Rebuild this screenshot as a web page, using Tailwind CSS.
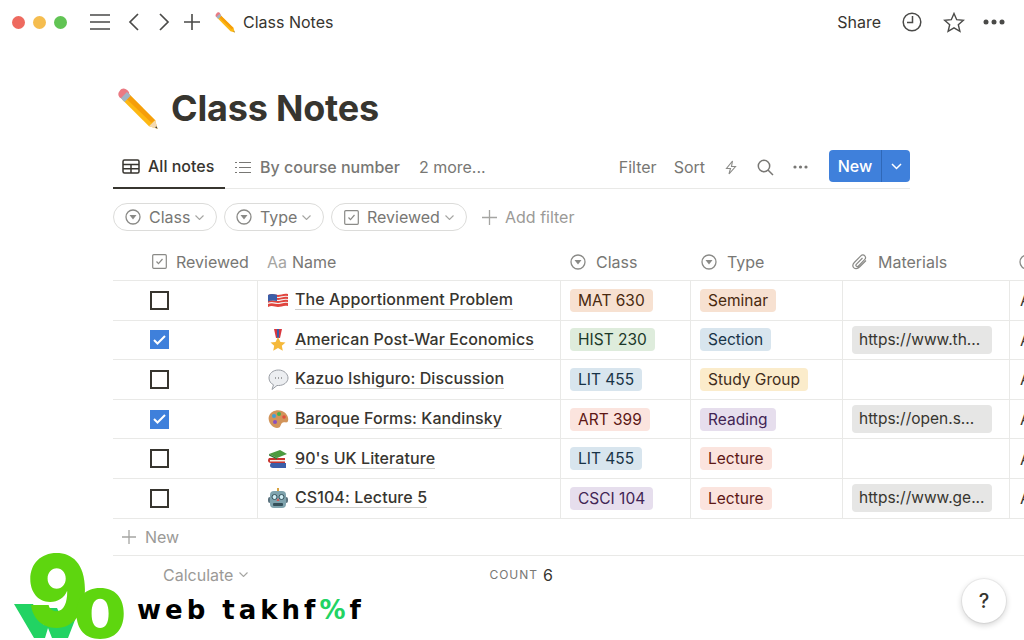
<!DOCTYPE html>
<html lang="en">
<head>
    <meta charset="UTF-8">
    <title>Class Notes</title>
    <script src="https://cdn.jsdelivr.net/npm/@tailwindcss/browser@4"></script>
</head>
<body class="w-[1024px] h-[640px] overflow-hidden bg-white font-['Inter',sans-serif] text-[#37352f] relative">
    <!-- Top bar -->
    <div class="h-[44px] flex items-center pl-[12px] pr-[19px]">
        <div class="flex gap-[8px]">
            <span class="w-[13px] h-[13px] rounded-full bg-[#ee6a5f]"></span>
            <span class="w-[13px] h-[13px] rounded-full bg-[#f5bd4f]"></span>
            <span class="w-[13px] h-[13px] rounded-full bg-[#61c454]"></span>
        </div>
        <svg class="ml-[23px]" width="20" height="16" viewBox="0 0 20 16" fill="none" stroke="#4a4a48" stroke-width="1.6"><path d="M0 1h20M0 8h20M0 15h20"/></svg>
        <svg class="ml-[18px]" width="11" height="18" viewBox="0 0 11 18" fill="none" stroke="#4a4a48" stroke-width="1.7"><path d="M10 1 2 9l8 8"/></svg>
        <svg class="ml-[20px]" width="11" height="18" viewBox="0 0 11 18" fill="none" stroke="#4a4a48" stroke-width="1.7"><path d="m1 1 8 8-8 8"/></svg>
        <svg class="ml-[14px]" width="16" height="16" viewBox="0 0 16 16" fill="none" stroke="#4a4a48" stroke-width="1.6"><path d="M8 0v16M0 8h16"/></svg>
        <svg class="ml-[14px]" width="22" height="22" viewBox="0 0 36 36"><path d="M10 6 32 28l2 7-7-2L5 11z" fill="#fdb813"/><path d="M10 6 32 28l-3 2L7 9z" fill="#f59e0b"/><path d="M4 4c2-3 5-2 6 0l1 2-5 5-2-1C2 9 2 6 4 4z" fill="#ea7a83"/><path d="m9 5 3 3-5 5-3-3z" fill="#9fb4c4"/><path d="m32 34 2 1-1-2z" fill="#333"/></svg>
        <span class="ml-[7px] text-[16px]">Class Notes</span>
        <span class="ml-auto text-[16px]">Share</span>
        <svg class="ml-[21px]" width="20" height="20" viewBox="0 0 20 20" fill="none" stroke="#4a4a48" stroke-width="1.5"><circle cx="10" cy="10" r="8.8"/><path d="M10.5 4v6.5H5"/></svg>
        <svg class="ml-[21px]" width="22" height="21" viewBox="0 0 22 21" fill="none" stroke="#4a4a48" stroke-width="1.4"><path d="m11 1.5 2.7 6.2 6.7.6-5.1 4.4 1.6 6.6L11 15.8l-5.9 3.5 1.6-6.6L1.600 8.300l6.700-.6z"/></svg>
        <svg class="ml-[18px]" width="22" height="6" viewBox="0 0 22 6" fill="#4a4a48"><circle cx="3" cy="3" r="2.500"/><circle cx="11" cy="3" r="2.500"/><circle cx="19" cy="3" r="2.500"/></svg>
    </div>

    <!-- Title -->
    <div class="pl-[116px] pt-[39px] flex items-center h-[88px]">
        <svg width="44" height="44" viewBox="0 0 36 36"><path d="M10 6 32 28l2 7-7-2L5 11z" fill="#fdb813"/><path d="M10 6 32 28l-3 2L7 9z" fill="#f59e0b"/><path d="M27 33l5-5 2 7z" fill="#f3d9b1"/><path d="m32 34 2 1-1-2z" fill="#333"/><path d="M3 4c2-3 5-2 7 0l1 2-5 5-2-1C2 9 1 6 3 4z" fill="#ea7a83"/><path d="m9 5 3 3-5 5-3-3z" fill="#9fb4c4"/></svg>
        <h1 class="ml-[11px] text-[36px] font-bold tracking-[-0.2px]">Class Notes</h1>
    </div>

    <div class="ml-[113px] w-[797px]">
        <!-- Views -->
        <div class="mt-[17px] h-[40px] pb-[3px] flex items-center border-b border-[#e9e9e7] relative text-[16px]">
            <div class="h-[40px] w-[112px] mb-[-4px] pb-[4px] flex items-center border-b-2 border-[#37352f] pl-[9px] font-medium">
                <svg width="18" height="15" viewBox="0 0 18 15" fill="none" stroke="#37352f" stroke-width="1.500"><rect x="1" y="1" width="16" height="13" rx="1.500"/><path d="M1 5.500h16M1 9.700h16M9 5.500V14"/></svg>
                <span class="ml-[8px]">All notes</span>
            </div>
            <svg class="ml-[10px]" width="16" height="13" viewBox="0 0 16 13" fill="none" stroke="#787774" stroke-width="1.200"><path d="M4 1.500h12M4 6.500h12M4 11.500h12M0 1.500h2M0 6.500h2M0 11.500h2"/></svg>
            <span class="ml-[9px] text-[#787774] font-medium">By course number</span>
            <span class="ml-[19px] text-[#787774]">2 more...</span>
            <span class="ml-auto text-[#787774]">Filter</span>
            <span class="ml-[17px] text-[#787774]">Sort</span>
            <svg class="ml-[20px]" width="12" height="15" viewBox="0 0 12 15" fill="none" stroke="#8a8a87" stroke-width="1.100"><path d="M7.500 1 1.500 8.500h4L4 14l6.500-7.500h-4z"/></svg>
            <svg class="ml-[20px]" width="17" height="17" viewBox="0 0 17 17" fill="none" stroke="#787774" stroke-width="1.500"><circle cx="7" cy="7" r="5.700"/><path d="m11 11 5 5"/></svg>
            <svg class="ml-[19px] mr-[102px]" width="15" height="4" viewBox="0 0 15 4" fill="#787774"><circle cx="2" cy="2" r="1.600"/><circle cx="7.500" cy="2" r="1.600"/><circle cx="13" cy="2" r="1.600"/></svg>
            <div class="absolute right-0 top-[1px] w-[81px] h-[32px] rounded-[4px] bg-[#3f80db] flex items-center text-white text-[16px] font-medium">
                <span class="w-[53px] h-full flex items-center justify-center border-r border-[#2f68b8]">New</span>
                <svg class="ml-[9px]" width="11" height="7" viewBox="0 0 11 7" fill="none" stroke="white" stroke-width="1.500"><path d="m1 1 4.500 4.500L10 1"/></svg>
            </div>
        </div>

        <!-- Filters -->
        <div class="mt-[14px] h-[28px] flex items-center gap-[7px] text-[16px] text-[#787774]">
            <div class="h-[28px] w-[104px] rounded-full border border-[#dcdcda] flex items-center pl-[11px]">
                <svg width="16" height="16" viewBox="0 0 16 16"><circle cx="8" cy="8" r="7" fill="none" stroke="#8a8a87" stroke-width="1.300"/><path d="M4.500 6h7L8 10.500z" fill="#8a8a87"/></svg>
                <span class="ml-[8px]">Class</span>
                <svg class="ml-[5px]" width="9" height="5" viewBox="0 0 9 5" fill="none" stroke="#a5a5a2" stroke-width="1.100"><path d="m.5.500 4 4 4-4"/></svg>
            </div>
            <div class="h-[28px] w-[100px] rounded-full border border-[#dcdcda] flex items-center pl-[11px]">
                <svg width="16" height="16" viewBox="0 0 16 16"><circle cx="8" cy="8" r="7" fill="none" stroke="#8a8a87" stroke-width="1.300"/><path d="M4.500 6h7L8 10.500z" fill="#8a8a87"/></svg>
                <span class="ml-[8px]">Type</span>
                <svg class="ml-[5px]" width="9" height="5" viewBox="0 0 9 5" fill="none" stroke="#a5a5a2" stroke-width="1.100"><path d="m.5.500 4 4 4-4"/></svg>
            </div>
            <div class="h-[28px] w-[136px] rounded-full border border-[#dcdcda] flex items-center pl-[12px]">
                <svg width="15" height="15" viewBox="0 0 15 15" fill="none" stroke="#8a8a87" stroke-width="1.200"><rect x=".7" y=".7" width="13.600" height="13.600" rx="1"/><path d="m4.500 7.500 2 2.200 4-4.700"/></svg>
                <span class="ml-[8px]">Reviewed</span>
                <svg class="ml-[5px]" width="9" height="5" viewBox="0 0 9 5" fill="none" stroke="#a5a5a2" stroke-width="1.100"><path d="m.5.500 4 4 4-4"/></svg>
            </div>
            <svg class="ml-[8px]" width="15" height="15" viewBox="0 0 15 15" fill="none" stroke="#a5a5a2" stroke-width="1.300"><path d="M7.500 0v15M0 7.500h15"/></svg>
            <span class="ml-[1px] text-[#9b9a97]">Add filter</span>
        </div>
    </div>

    <!-- Table -->
    <div class="ml-[113px] mt-[12px] w-[911px] text-[16px]">
        <div class="h-[38px] grid grid-cols-[144px_303px_130px_152px_167px_15px] items-center text-[#787774] border-b border-[#e9e9e7]">
            <div class="flex items-center pl-[39px]">
                <svg width="15" height="15" viewBox="0 0 15 15" fill="none" stroke="#8a8a87" stroke-width="1.200"><rect x=".7" y=".7" width="13.600" height="13.600" rx="1"/><path d="m4.500 7.500 2 2.200 4-4.700"/></svg>
                <span class="ml-[9px]">Reviewed</span>
            </div>
            <div class="flex items-center pl-[10px]"><span class="text-[#a5a5a2]">Aa</span><span class="ml-[5px]">Name</span></div>
            <div class="flex items-center pl-[10px]">
                <svg width="16" height="16" viewBox="0 0 16 16"><circle cx="8" cy="8" r="7" fill="none" stroke="#8a8a87" stroke-width="1.300"/><path d="M4.500 6h7L8 10.500z" fill="#8a8a87"/></svg>
                <span class="ml-[10px]">Class</span>
            </div>
            <div class="flex items-center pl-[11px]">
                <svg width="16" height="16" viewBox="0 0 16 16"><circle cx="8" cy="8" r="7" fill="none" stroke="#8a8a87" stroke-width="1.300"/><path d="M4.500 6h7L8 10.500z" fill="#8a8a87"/></svg>
                <span class="ml-[10px]">Type</span>
            </div>
            <div class="flex items-center pl-[10px]">
                <svg width="16" height="17" viewBox="0 0 16 17" fill="none" stroke="#8a8a87" stroke-width="1.200"><path d="M14 7.500 7.500 14c-2 2-5 2-6 .5s-.7-3.500.8-5l6.500-6.700c1.200-1.200 3-1.200 4 0s1 2.700-.2 3.900L6.500 13c-.7.700-1.700.7-2.200.2s-.5-1.400.2-2.100L10.500 5"/></svg>
                <span class="ml-[10px]">Materials</span>
            </div>
            <svg class="ml-[10px]" width="16" height="16" viewBox="0 0 16 16"><circle cx="8" cy="8" r="7" fill="none" stroke="#8a8a87" stroke-width="1.300"/></svg>
        </div>

        <!-- Row 1 -->
        <div class="h-[39.6px] grid grid-cols-[144px_303px_130px_152px_167px_15px] items-center border-b border-[#e9e9e7]">
            <div class="pl-[37px]"><div class="w-[19px] h-[19px] border-2 border-[#37352f]"></div></div>
            <div class="h-full border-l border-[#e9e9e7] flex items-center pl-[10px]">
                <svg width="20" height="16" viewBox="0 0 20 16"><path d="M0 3c4-2 7 0 10 0s6-2 10-1v12c-4-1-7 1-10 1s-6-2-10 0z" fill="#e0453e"/><path d="M0 5.500c4-2 7 0 10 0s6-2 10-1M0 8.500c4-2 7 0 10 0s6-2 10-1M0 11.500c4-2 7 0 10 0s6-2 10-1" fill="none" stroke="#f3f0f0" stroke-width="1.200"/><path d="M0 3c3-1.500 6-.8 9-.2V9C6 8.500 3 8 0 9.500z" fill="#3b5ea8"/></svg>
                <span class="ml-[7px] font-medium border-b border-[#cfcfcc] leading-[19px] tracking-[0.08px]">The Apportionment Problem</span>
            </div>
            <div class="h-full border-l border-[#e9e9e7] flex items-center pl-[9px]"><span class="h-[23px] px-[8px] rounded-[4px] bg-[#f7e1d1] text-[#49290e] leading-[23px] text-[15.5px]">MAT 630</span></div>
            <div class="h-full border-l border-[#e9e9e7] flex items-center pl-[9px]"><span class="h-[23px] px-[8px] rounded-[4px] bg-[#f7e1d1] text-[#49290e] leading-[23px] text-[15.5px]">Seminar</span></div>
            <div class="h-full border-l border-[#e9e9e7]"></div>
            <div class="h-full border-l border-[#e9e9e7] flex items-center pl-[10px]">A</div>
        </div>
        <!-- Row 2 -->
        <div class="h-[39.6px] grid grid-cols-[144px_303px_130px_152px_167px_15px] items-center border-b border-[#e9e9e7]">
            <div class="pl-[37px]"><div class="w-[19px] h-[19px] bg-[#3f80db] flex items-center justify-center"><svg width="13" height="10" viewBox="0 0 13 10" fill="none" stroke="white" stroke-width="2"><path d="m1 5 3.500 3.500L12 1"/></svg></div></div>
            <div class="h-full border-l border-[#e9e9e7] flex items-center pl-[10px]">
                <svg width="20" height="22" viewBox="0 0 20 22"><path d="M6 0h8l-2 9H8z" fill="#d9363e"/><path d="M9 0h2v9H9z" fill="#3b5ea8"/><path d="m10 8 2.500 5 5 .5-3.700 3.300 1 5L10 19l-4.800 2.800 1-5L2.500 13.500l5-.5z" fill="#f5b93a"/></svg>
                <span class="ml-[7px] font-medium border-b border-[#cfcfcc] leading-[19px] tracking-[0.08px]">American Post-War Economics</span>
            </div>
            <div class="h-full border-l border-[#e9e9e7] flex items-center pl-[9px]"><span class="h-[23px] px-[8px] rounded-[4px] bg-[#deecdc] text-[#1c3829] leading-[23px] text-[15.5px]">HIST 230</span></div>
            <div class="h-full border-l border-[#e9e9e7] flex items-center pl-[9px]"><span class="h-[23px] px-[8px] rounded-[4px] bg-[#d8e5ee] text-[#183347] leading-[23px] text-[15.5px]">Section</span></div>
            <div class="h-full border-l border-[#e9e9e7] flex items-center pl-[9px]"><span class="w-[140px] h-[28px] px-[7px] rounded-[4px] bg-[#e6e6e5] leading-[28px] text-[15.5px] whitespace-nowrap">https://www.th...</span></div>
            <div class="h-full border-l border-[#e9e9e7] flex items-center pl-[10px]">A</div>
        </div>
        <!-- Row 3 -->
        <div class="h-[39.6px] grid grid-cols-[144px_303px_130px_152px_167px_15px] items-center border-b border-[#e9e9e7]">
            <div class="pl-[37px]"><div class="w-[19px] h-[19px] border-2 border-[#37352f]"></div></div>
            <div class="h-full border-l border-[#e9e9e7] flex items-center pl-[10px]">
                <svg width="21" height="21" viewBox="0 0 21 21"><path d="M10.500 1C5 1 1 4.500 1 9c0 3 1.800 5.500 4.500 6.800L4 20.500l5-4h1.500c5.500 0 9.500-3.500 9.500-7.500S16 1 10.500 1z" fill="#eceef1" stroke="#9a9ea5"/><path d="M7 9h1M10 9h1M13 9h1" stroke="#555" stroke-width="1.200"/></svg>
                <span class="ml-[6px] font-medium border-b border-[#cfcfcc] leading-[19px] tracking-[0.08px]">Kazuo Ishiguro: Discussion</span>
            </div>
            <div class="h-full border-l border-[#e9e9e7] flex items-center pl-[9px]"><span class="h-[23px] px-[8px] rounded-[4px] bg-[#d8e5ee] text-[#183347] leading-[23px] text-[15.5px]">LIT 455</span></div>
            <div class="h-full border-l border-[#e9e9e7] flex items-center pl-[9px]"><span class="h-[23px] px-[8px] rounded-[4px] bg-[#fbeccb] text-[#402c1b] leading-[23px] text-[15.5px]">Study Group</span></div>
            <div class="h-full border-l border-[#e9e9e7]"></div>
            <div class="h-full border-l border-[#e9e9e7] flex items-center pl-[10px]">A</div>
        </div>
        <!-- Row 4 -->
        <div class="h-[39.6px] grid grid-cols-[144px_303px_130px_152px_167px_15px] items-center border-b border-[#e9e9e7]">
            <div class="pl-[37px]"><div class="w-[19px] h-[19px] bg-[#3f80db] flex items-center justify-center"><svg width="13" height="10" viewBox="0 0 13 10" fill="none" stroke="white" stroke-width="2"><path d="m1 5 3.500 3.500L12 1"/></svg></div></div>
            <div class="h-full border-l border-[#e9e9e7] flex items-center pl-[10px]">
                <svg width="21" height="20" viewBox="0 0 21 20"><path d="M1 7c2-5 8-7 13-5s7 7 6 10-4 0-6 2-1 5-5 5S-1 13 1 7z" fill="#d2945a"/><circle cx="6" cy="7" r="2" fill="#3f9fd8"/><circle cx="11" cy="5" r="2" fill="#48b04b"/><circle cx="16" cy="8" r="1.800" fill="#e2503f"/><circle cx="7" cy="13" r="2" fill="#8a4fc0"/></svg>
                <span class="ml-[6px] font-medium border-b border-[#cfcfcc] leading-[19px] tracking-[0.08px]">Baroque Forms: Kandinsky</span>
            </div>
            <div class="h-full border-l border-[#e9e9e7] flex items-center pl-[9px]"><span class="h-[23px] px-[8px] rounded-[4px] bg-[#fbe4de] text-[#5d1715] leading-[23px] text-[15.5px]">ART 399</span></div>
            <div class="h-full border-l border-[#e9e9e7] flex items-center pl-[9px]"><span class="h-[23px] px-[8px] rounded-[4px] bg-[#e6deed] text-[#412454] leading-[23px] text-[15.5px]">Reading</span></div>
            <div class="h-full border-l border-[#e9e9e7] flex items-center pl-[9px]"><span class="w-[140px] h-[28px] px-[7px] rounded-[4px] bg-[#e6e6e5] leading-[28px] text-[15.5px] whitespace-nowrap">https://open.s...</span></div>
            <div class="h-full border-l border-[#e9e9e7] flex items-center pl-[10px]">A</div>
        </div>
        <!-- Row 5 -->
        <div class="h-[39.6px] grid grid-cols-[144px_303px_130px_152px_167px_15px] items-center border-b border-[#e9e9e7]">
            <div class="pl-[37px]"><div class="w-[19px] h-[19px] border-2 border-[#37352f]"></div></div>
            <div class="h-full border-l border-[#e9e9e7] flex items-center pl-[10px]">
                <svg width="20" height="20" viewBox="0 0 20 20"><path d="M3 14h15v5H5c-2 0-3-1-3-2.500S3 14 3 14z" fill="#3b5ea8"/><path d="M1 9h16v5H3C1 14 0 13 0 11.500S1 9 1 9z" fill="#c9342f"/><path d="M2 11h15v1.500H2z" fill="#f1efe8"/><path d="M1 5 12 1l7 4-10 4z" fill="#4c9a3f"/><path d="m1 5 8 4v1.500L1 6.500z" fill="#2f7530"/></svg>
                <span class="ml-[7px] font-medium border-b border-[#cfcfcc] leading-[19px] tracking-[0.08px]">90's UK Literature</span>
            </div>
            <div class="h-full border-l border-[#e9e9e7] flex items-center pl-[9px]"><span class="h-[23px] px-[8px] rounded-[4px] bg-[#d8e5ee] text-[#183347] leading-[23px] text-[15.5px]">LIT 455</span></div>
            <div class="h-full border-l border-[#e9e9e7] flex items-center pl-[9px]"><span class="h-[23px] px-[8px] rounded-[4px] bg-[#fbe4de] text-[#5d1715] leading-[23px] text-[15.5px]">Lecture</span></div>
            <div class="h-full border-l border-[#e9e9e7]"></div>
            <div class="h-full border-l border-[#e9e9e7] flex items-center pl-[10px]">A</div>
        </div>
        <!-- Row 6 -->
        <div class="h-[39.6px] grid grid-cols-[144px_303px_130px_152px_167px_15px] items-center border-b border-[#e9e9e7]">
            <div class="pl-[37px]"><div class="w-[19px] h-[19px] border-2 border-[#37352f]"></div></div>
            <div class="h-full border-l border-[#e9e9e7] flex items-center pl-[10px]">
                <svg width="20" height="21" viewBox="0 0 20 21"><rect x="9" y="0" width="2" height="4" fill="#d9a441"/><rect x="0" y="9" width="20" height="6" rx="2" fill="#5c7480"/><rect x="2" y="3" width="16" height="17" rx="4" fill="#7fa3ad"/><circle cx="6.500" cy="9" r="2.500" fill="#cfeef5" stroke="#35505a"/><circle cx="13.500" cy="9" r="2.500" fill="#cfeef5" stroke="#35505a"/><path d="m10 10 1.500 3h-3z" fill="#d9534f"/><rect x="5" y="15" width="10" height="3" rx="1" fill="#35505a"/></svg>
                <span class="ml-[7px] font-medium border-b border-[#cfcfcc] leading-[19px] tracking-[0.08px]">CS104: Lecture 5</span>
            </div>
            <div class="h-full border-l border-[#e9e9e7] flex items-center pl-[9px]"><span class="h-[23px] px-[8px] rounded-[4px] bg-[#e6deed] text-[#412454] leading-[23px] text-[15.5px]">CSCI 104</span></div>
            <div class="h-full border-l border-[#e9e9e7] flex items-center pl-[9px]"><span class="h-[23px] px-[8px] rounded-[4px] bg-[#fbe4de] text-[#5d1715] leading-[23px] text-[15.5px]">Lecture</span></div>
            <div class="h-full border-l border-[#e9e9e7] flex items-center pl-[9px]"><span class="w-[140px] h-[28px] px-[7px] rounded-[4px] bg-[#e6e6e5] leading-[28px] text-[15.5px] whitespace-nowrap">https://www.ge...</span></div>
            <div class="h-full border-l border-[#e9e9e7] flex items-center pl-[10px]">A</div>
        </div>

        <!-- New row -->
        <div class="h-[37px] flex items-center pl-[9px] text-[#9b9a97] border-b border-[#e9e9e7]">
            <svg width="14" height="14" viewBox="0 0 14 14" fill="none" stroke="#a5a5a2" stroke-width="1.300"><path d="M7 0v14M0 7h14"/></svg>
            <span class="ml-[9px]">New</span>
        </div>
        <!-- Footer -->
        <div class="h-[38px] flex items-center text-[#9b9a97]">
            <span class="ml-[50px]">Calculate</span>
            <svg class="ml-[6px]" width="9" height="5" viewBox="0 0 9 5" fill="none" stroke="#a5a5a2" stroke-width="1.100"><path d="m.5.500 4 4 4-4"/></svg>
            <span class="ml-[241px] text-[12px] tracking-[1px] text-[#787774]">COUNT</span>
            <span class="ml-[5px] text-[16px] text-[#37352f]">6</span>
        </div>
    </div>

    <!-- Help button -->
    <div class="absolute left-[962px] top-[579px] w-[44px] h-[44px] rounded-full bg-white shadow-[0_0_0_1px_rgba(15,15,15,0.05),0_2px_6px_rgba(15,15,15,0.2)] flex items-center justify-center text-[20px] font-medium">?</div>

    <!-- Watermark logo -->
    <svg class="absolute left-0 top-[550px]" width="130" height="90" viewBox="0 0 130 90"><path d="M14 54H33L44 75 50 58H57L65 75 75 50V70L68 88H52L48 78 45 88H34Z" fill="#22d363"/></svg>
    <span class="absolute left-[24px] top-[541px] font-black text-[100px] leading-[100px] text-[#5ed60f] scale-x-[.9]">9</span>
    <span class="absolute left-[76px] top-[575px] font-black text-[68px] leading-[76px] text-[#5ed60f] scale-x-[1.08]">0</span>
    <span class="absolute left-[137px] top-[595px] font-['DejaVu_Sans',sans-serif] font-bold text-[26px] leading-[30px] tracking-[4px] text-black whitespace-nowrap">web takhf<span class="text-[#22d363]">%</span>f</span>
</body>
</html>
